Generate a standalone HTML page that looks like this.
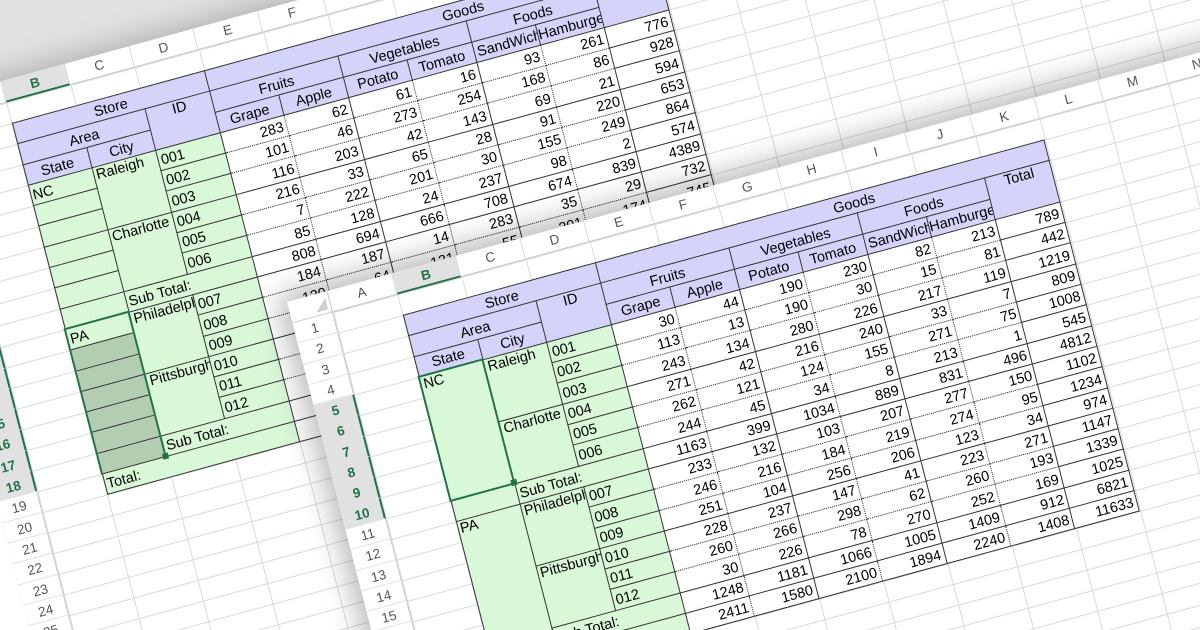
<!DOCTYPE html>
<html><head><meta charset="utf-8">
<style>
html,body{margin:0;padding:0;width:1200px;height:630px;overflow:hidden}
body{font-family:"Liberation Sans",sans-serif}
#wrap{position:relative;width:1200px;height:630px;overflow:hidden;background:#e2e2e2}
.sheet{position:absolute;transform-origin:0 0;transform:matrix(0.9646,-0.2639,0.2487,0.9686,0,0);background:#fff}
.back{left:-104px;top:110px;width:1450px;height:950px;box-shadow:0 0 30px 6px rgba(0,0,0,.22)}
.front{left:287px;top:302px;width:1000px;height:640px;box-shadow:0 0 28px 8px rgba(0,0,0,.28)}
.grid{position:absolute;left:42px;top:22px;right:0;bottom:0;background-image:linear-gradient(to right,#d9d9d9 1px,transparent 1px),linear-gradient(to bottom,#d9d9d9 1px,transparent 1px);background-size:66.6px 21.3px}
.corner{position:absolute;left:0;top:0;width:42px;height:22px;box-sizing:border-box;border-right:1px solid #c8c8c8;border-bottom:1px solid #c8c8c8}
.corner:after{content:"";position:absolute;right:3px;bottom:3px;border-left:12px solid transparent;border-bottom:12px solid #d0d0d0}
.ch{position:absolute;left:42px;top:0;height:22px;display:flex}
.ch span{width:66.6px;height:22px;flex:none;box-sizing:border-box;border-right:1px solid #dadada;border-bottom:1px solid #c8c8c8;text-align:center;font-size:13.5px;line-height:22px;color:#555}
.ch span.s{background:#e1e1e1;color:#217346;font-weight:bold;border-bottom:2px solid #217346}
.rh{position:absolute;left:0;top:22px;width:42px}
.rh div{height:21.3px;box-sizing:border-box;border-bottom:1px solid #e2e2e2;border-right:1px solid #c8c8c8;text-align:center;line-height:21px;font-size:13.5px;color:#555}
.rh div.s{background:#e1e1e1;color:#217346;font-weight:bold;border-right:2px solid #217346}
.t{position:absolute;left:108px;top:43px;border-collapse:collapse;table-layout:fixed;width:666px;font-size:14.5px;color:#000}
.t tr{height:21.3px}
.t td{padding:0 3px;border:1px dotted #333;text-align:right;vertical-align:bottom;white-space:nowrap;overflow:hidden;line-height:17px;background:#fff}
.t td.h{background:#d4d4fa;text-align:center;border:1px solid #333}
.t td.g{background:#d8f8d8;text-align:left;border:1px solid #333;padding-left:2px}
.t td.vt{vertical-align:top}
.t td.a{border-right:1px solid #333}
.t td.T{border:1px solid #333}
.t tr.s td{border-bottom:1px solid #333}
.t td.sel{border:2px solid #217346}
.t td.sl{border-left:2px solid #217346;border-right:2px solid #217346}
.t td.dk{background:#b3cdb3}
.t td.sb{border-bottom:2px solid #217346}
.fh{position:absolute;width:6px;height:6px;background:#217346}
</style></head><body>
<div id="wrap">
<div class="sheet back">
<div style="position:absolute;left:-100px;top:0;width:100px;height:950px;background:#fff"></div>
<div class="grid"></div>
<div class="corner"></div>
<div class="ch"><span>A</span><span class="s">B</span><span>C</span><span>D</span><span>E</span><span>F</span><span>G</span><span>H</span><span>I</span><span>J</span><span>K</span><span>L</span><span>M</span><span>N</span><span>O</span><span>P</span><span>Q</span><span>R</span><span>S</span><span>T</span></div>
<div class="rh"><div>1</div><div>2</div><div>3</div><div>4</div><div>5</div><div>6</div><div>7</div><div>8</div><div>9</div><div>10</div><div>11</div><div class="s">12</div><div class="s">13</div><div class="s">14</div><div class="s">15</div><div class="s">16</div><div class="s">17</div><div class="s">18</div><div>19</div><div>20</div><div>21</div><div>22</div><div>23</div><div>24</div><div>25</div><div>26</div><div>27</div><div>28</div><div>29</div><div>30</div><div>31</div><div>32</div><div>33</div><div>34</div><div>35</div><div>36</div><div>37</div><div>38</div><div>39</div><div>40</div><div>41</div><div>42</div></div>
<table class="t">
<colgroup><col><col><col><col><col><col><col><col><col><col></colgroup>
<tr><td class="h" colspan="3">Store</td><td class="h" colspan="7" style="text-indent:66px">Goods</td></tr>
<tr><td class="h" colspan="2">Area</td><td class="h vt" rowspan="2">ID</td><td class="h" colspan="2">Fruits</td><td class="h" colspan="2">Vegetables</td><td class="h" colspan="2">Foods</td><td class="h vt" rowspan="2">Total</td></tr>
<tr class="s"><td class="h">State</td><td class="h">City</td><td class="h">Grape</td><td class="h">Apple</td><td class="h">Potato</td><td class="h">Tomato</td><td class="h">SandWich</td><td class="h" style="padding:0">Hamburger</td></tr>
<tr><td class="g">NC</td><td class="g vt" rowspan="3">Raleigh</td><td class="g">001</td><td>283</td><td class="a">62</td><td>61</td><td class="a">16</td><td>93</td><td class="a">261</td><td class="T">776</td></tr>
<tr><td class="g"></td><td class="g">002</td><td>101</td><td class="a">46</td><td>273</td><td class="a">254</td><td>168</td><td class="a">86</td><td class="T">928</td></tr>
<tr class="s"><td class="g"></td><td class="g">003</td><td>116</td><td class="a">203</td><td>42</td><td class="a">143</td><td>69</td><td class="a">21</td><td class="T">594</td></tr>
<tr><td class="g"></td><td class="g vt" rowspan="3">Charlotte</td><td class="g">004</td><td>216</td><td class="a">33</td><td>65</td><td class="a">28</td><td>91</td><td class="a">220</td><td class="T">653</td></tr>
<tr><td class="g"></td><td class="g">005</td><td>7</td><td class="a">222</td><td>201</td><td class="a">30</td><td>155</td><td class="a">249</td><td class="T">864</td></tr>
<tr class="s"><td class="g"></td><td class="g">006</td><td>85</td><td class="a">128</td><td>24</td><td class="a">237</td><td>98</td><td class="a">2</td><td class="T">574</td></tr>
<tr class="s"><td class="g"></td><td class="g" colspan="2">Sub Total:</td><td>808</td><td class="a">694</td><td>666</td><td class="a">708</td><td>674</td><td class="a">839</td><td class="T">4389</td></tr>
<tr><td class="g sel" style="border-bottom:1px solid #333">PA</td><td class="g vt" rowspan="3">Philadelphia</td><td class="g">007</td><td>184</td><td class="a">187</td><td>14</td><td class="a">283</td><td>35</td><td class="a">29</td><td class="T">732</td></tr>
<tr><td class="g dk sl"></td><td class="g">008</td><td>120</td><td class="a">64</td><td>131</td><td class="a">55</td><td>201</td><td class="a">174</td><td class="T">745</td></tr>
<tr class="s"><td class="g dk sl"></td><td class="g">009</td><td>95</td><td class="a">150</td><td>92</td><td class="a">190</td><td>17</td><td class="a">63</td><td class="T">607</td></tr>
<tr><td class="g dk sl"></td><td class="g vt" rowspan="3">Pittsburgh</td><td class="g">010</td><td>210</td><td class="a">91</td><td>254</td><td class="a">12</td><td>143</td><td class="a">110</td><td class="T">820</td></tr>
<tr><td class="g dk sl"></td><td class="g">011</td><td>33</td><td class="a">240</td><td>77</td><td class="a">246</td><td>66</td><td class="a">235</td><td class="T">897</td></tr>
<tr class="s"><td class="g dk sl"></td><td class="g">012</td><td>77</td><td class="a">18</td><td>160</td><td class="a">88</td><td>259</td><td class="a">41</td><td class="T">643</td></tr>
<tr class="s"><td class="g dk sl sb"></td><td class="g" colspan="2">Sub Total:</td><td>719</td><td class="a">750</td><td>728</td><td class="a">874</td><td>721</td><td class="a">652</td><td class="T">4444</td></tr>
<tr class="s"><td class="g" colspan="3">Total:</td><td>1527</td><td class="a">1444</td><td>1394</td><td class="a">1582</td><td>1395</td><td class="a">1491</td><td class="T">8833</td></tr>
</table>
<div class="fh" style="left:172px;top:402px"></div>
</div>

<div class="sheet front">
<div class="grid"></div>
<div class="corner"></div>
<div class="ch"><span>A</span><span class="s">B</span><span>C</span><span>D</span><span>E</span><span>F</span><span>G</span><span>H</span><span>I</span><span>J</span><span>K</span><span>L</span><span>M</span><span>N</span><span>O</span></div>
<div class="rh"><div>1</div><div>2</div><div>3</div><div>4</div><div class="s">5</div><div class="s">6</div><div class="s">7</div><div class="s">8</div><div class="s">9</div><div class="s">10</div><div>11</div><div>12</div><div>13</div><div>14</div><div>15</div><div>16</div><div>17</div><div>18</div><div>19</div><div>20</div><div>21</div><div>22</div><div>23</div><div>24</div><div>25</div><div>26</div><div>27</div><div>28</div><div>29</div></div>
<table class="t">
<colgroup><col><col><col><col><col><col><col><col><col><col></colgroup>
<tr><td class="h" colspan="3">Store</td><td class="h" colspan="7" style="text-indent:66px">Goods</td></tr>
<tr><td class="h" colspan="2">Area</td><td class="h vt" rowspan="2">ID</td><td class="h" colspan="2">Fruits</td><td class="h" colspan="2">Vegetables</td><td class="h" colspan="2">Foods</td><td class="h vt" rowspan="2">Total</td></tr>
<tr class="s"><td class="h">State</td><td class="h">City</td><td class="h">Grape</td><td class="h">Apple</td><td class="h">Potato</td><td class="h">Tomato</td><td class="h">SandWich</td><td class="h" style="padding:0">Hamburger</td></tr>
<tr><td class="g vt sel" rowspan="6">NC</td><td class="g vt" rowspan="3">Raleigh</td><td class="g">001</td><td>30</td><td class="a">44</td><td>190</td><td class="a">230</td><td>82</td><td class="a">213</td><td class="T">789</td></tr>
<tr><td class="g">002</td><td>113</td><td class="a">13</td><td>190</td><td class="a">30</td><td>15</td><td class="a">81</td><td class="T">442</td></tr>
<tr class="s"><td class="g">003</td><td>243</td><td class="a">134</td><td>280</td><td class="a">226</td><td>217</td><td class="a">119</td><td class="T">1219</td></tr>
<tr><td class="g vt" rowspan="3">Charlotte</td><td class="g">004</td><td>271</td><td class="a">42</td><td>216</td><td class="a">240</td><td>33</td><td class="a">7</td><td class="T">809</td></tr>
<tr><td class="g">005</td><td>262</td><td class="a">121</td><td>124</td><td class="a">155</td><td>271</td><td class="a">75</td><td class="T">1008</td></tr>
<tr class="s"><td class="g">006</td><td>244</td><td class="a">45</td><td>34</td><td class="a">8</td><td>213</td><td class="a">1</td><td class="T">545</td></tr>
<tr class="s"><td class="g"></td><td class="g" colspan="2">Sub Total:</td><td>1163</td><td class="a">399</td><td>1034</td><td class="a">889</td><td>831</td><td class="a">496</td><td class="T">4812</td></tr>
<tr><td class="g vt" rowspan="7">PA</td><td class="g vt" rowspan="3">Philadelphia</td><td class="g">007</td><td>233</td><td class="a">132</td><td>103</td><td class="a">207</td><td>277</td><td class="a">150</td><td class="T">1102</td></tr>
<tr><td class="g">008</td><td>246</td><td class="a">216</td><td>184</td><td class="a">219</td><td>274</td><td class="a">95</td><td class="T">1234</td></tr>
<tr class="s"><td class="g">009</td><td>251</td><td class="a">104</td><td>256</td><td class="a">206</td><td>123</td><td class="a">34</td><td class="T">974</td></tr>
<tr><td class="g vt" rowspan="3">Pittsburgh</td><td class="g">010</td><td>228</td><td class="a">237</td><td>147</td><td class="a">41</td><td>223</td><td class="a">271</td><td class="T">1147</td></tr>
<tr><td class="g">011</td><td>260</td><td class="a">266</td><td>298</td><td class="a">62</td><td>260</td><td class="a">193</td><td class="T">1339</td></tr>
<tr class="s"><td class="g">012</td><td>30</td><td class="a">226</td><td>78</td><td class="a">270</td><td>252</td><td class="a">169</td><td class="T">1025</td></tr>
<tr class="s"><td class="g" colspan="2">Sub Total:</td><td>1248</td><td class="a">1181</td><td>1066</td><td class="a">1005</td><td>1409</td><td class="a">912</td><td class="T">6821</td></tr>
<tr class="s"><td class="g" colspan="3">Total:</td><td>2411</td><td class="a">1580</td><td>2100</td><td class="a">1894</td><td>2240</td><td class="a">1408</td><td class="T">11633</td></tr>
</table>
<div class="fh" style="left:172px;top:231px"></div>
</div>
</div>
</body></html>
